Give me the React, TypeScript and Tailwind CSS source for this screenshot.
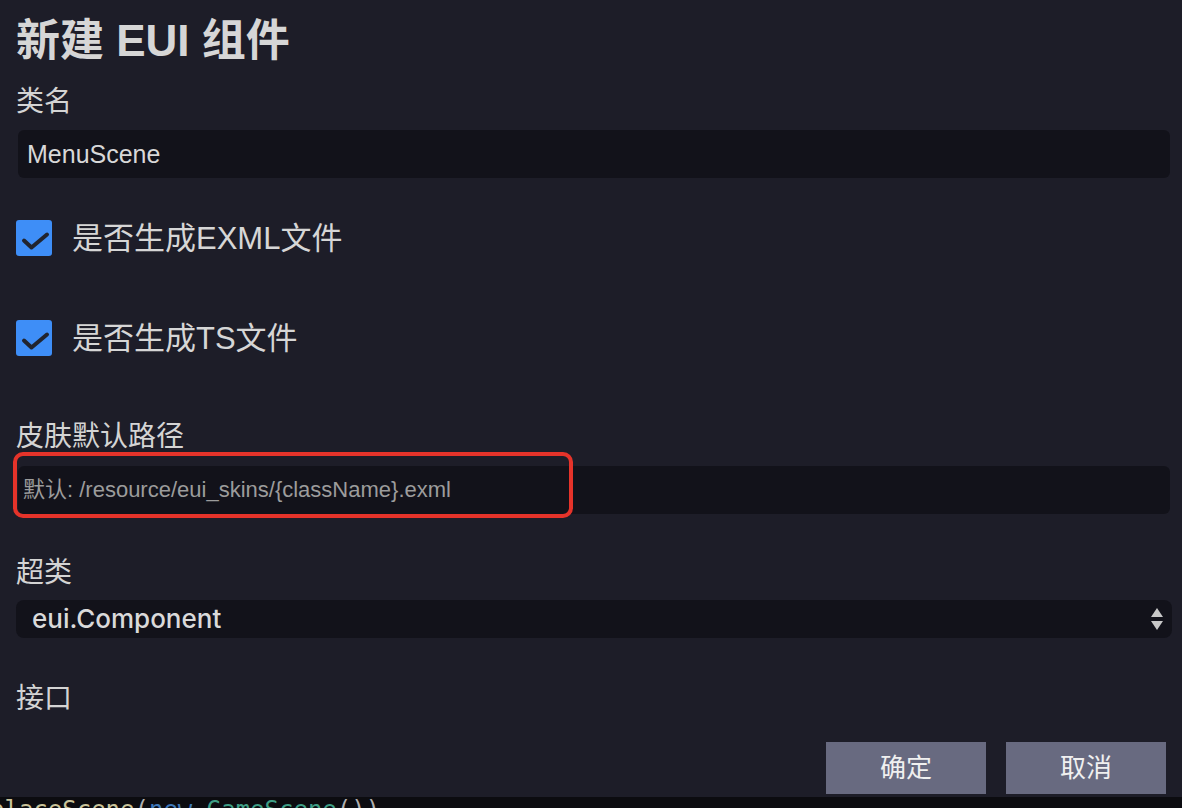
import React from "react";

const sans = "font-['Liberation_Sans','Noto_Sans_CJK_SC',sans-serif]";

function Checkbox({ label }: { label: string }) {
  return (
    <div className="flex h-[36px] items-center">
      <div className="h-[36px] w-[36px] rounded-[3px] bg-[#3e8ef7]">
        <svg viewBox="0 0 36 36" className="h-full w-full">
          <polyline
            points="8,20.5 15.5,27.5 31,14.5"
            fill="none"
            stroke="#21242e"
            strokeWidth="4"
            strokeLinecap="round"
            strokeLinejoin="round"
          />
        </svg>
      </div>
      <span className="ml-[20px] text-[31px] leading-none text-[#d6d6d6]">{label}</span>
    </div>
  );
}

function Label({ text, className = "" }: { text: string; className?: string }) {
  return (
    <div className={`flex h-[36px] items-center text-[28px] leading-none text-[#d4d4d4] ${className}`}>
      {text}
    </div>
  );
}

export default function App() {
  return (
    <div className={`flex h-[808px] w-[1182px] flex-col overflow-hidden bg-[#0c0c10] ${sans}`}>
      <div className="flex h-[797px] flex-col bg-[#1d1d28] pl-[16px] pr-[10px]">
        <div className="flex h-[82px] items-center">
          <h1 className="text-[44px] font-bold leading-none text-[#d6d6d6]">新建 EUI 组件</h1>
        </div>

        <Label text="类名" className="mt-[2px]" />
        <div className="mx-[2px] mt-[10px] flex h-[48px] items-center rounded-[6px] bg-[#12121a] px-[9px]">
          <span className="text-[25px] leading-none text-[#d8d8d8]">MenuScene</span>
        </div>

        <div className="mt-[42px]">
          <Checkbox label="是否生成EXML文件" />
        </div>
        <div className="mt-[64px]">
          <Checkbox label="是否生成TS文件" />
        </div>

        <Label text="皮肤默认路径" className="mt-[63px]" />
        <div className="relative mx-[2px] mt-[11px] flex h-[48px] items-center rounded-[6px] bg-[#12121a] px-[5px]">
          <span className="text-[22px] leading-none text-[#9c9c9c]">默认: /resource/eui_skins/{"{className}"}.exml</span>
          <div className="pointer-events-none absolute left-[-5px] top-[-14px] h-[66px] w-[560px] rounded-[10px] border-[4px] border-[#e5332a]" />
        </div>

        <Label text="超类" className="mt-[41px]" />
        <div className="mt-[9px] flex h-[38px] items-center justify-between rounded-[8px] bg-[#12121a] pl-[16px] pr-[8px]">
          <span className="font-['Inter','Noto_Sans_CJK_SC',sans-serif] text-[26px] font-medium leading-none text-[#dadada]">
            eui.Component
          </span>
          <svg viewBox="0 0 14 24" className="h-[24px] w-[14px]">
            <polygon points="7,1 13,10 1,10" fill="#c8c8c8" />
            <polygon points="1,14 13,14 7,23" fill="#c8c8c8" />
          </svg>
        </div>

        <Label text="接口" className="mt-[43px]" />

        <div className="mr-[6px] mt-[25px] flex justify-end gap-[20px]">
          <button className="flex h-[52px] w-[160px] items-center justify-center bg-[#686a80] text-[26px] leading-none text-[#f0f0f0]">
            确定
          </button>
          <button className="flex h-[52px] w-[160px] items-center justify-center bg-[#686a80] text-[26px] leading-none text-[#f0f0f0]">
            取消
          </button>
        </div>
      </div>

      <div className="h-[11px] overflow-hidden">
        <div className="ml-[-10px] mt-[1px] whitespace-pre font-['DejaVu_Sans_Mono',monospace] text-[24px] leading-[24px]">
          <span className="text-[#c9c39a]">placeScene</span>
          <span className="text-[#b0b0b0]">(</span>
          <span className="text-[#3f78b8]">new</span>
          <span> </span>
          <span className="text-[#3f9e85]">GameScene</span>
          <span className="text-[#b0b0b0]">())</span>
        </div>
      </div>
    </div>
  );
}
